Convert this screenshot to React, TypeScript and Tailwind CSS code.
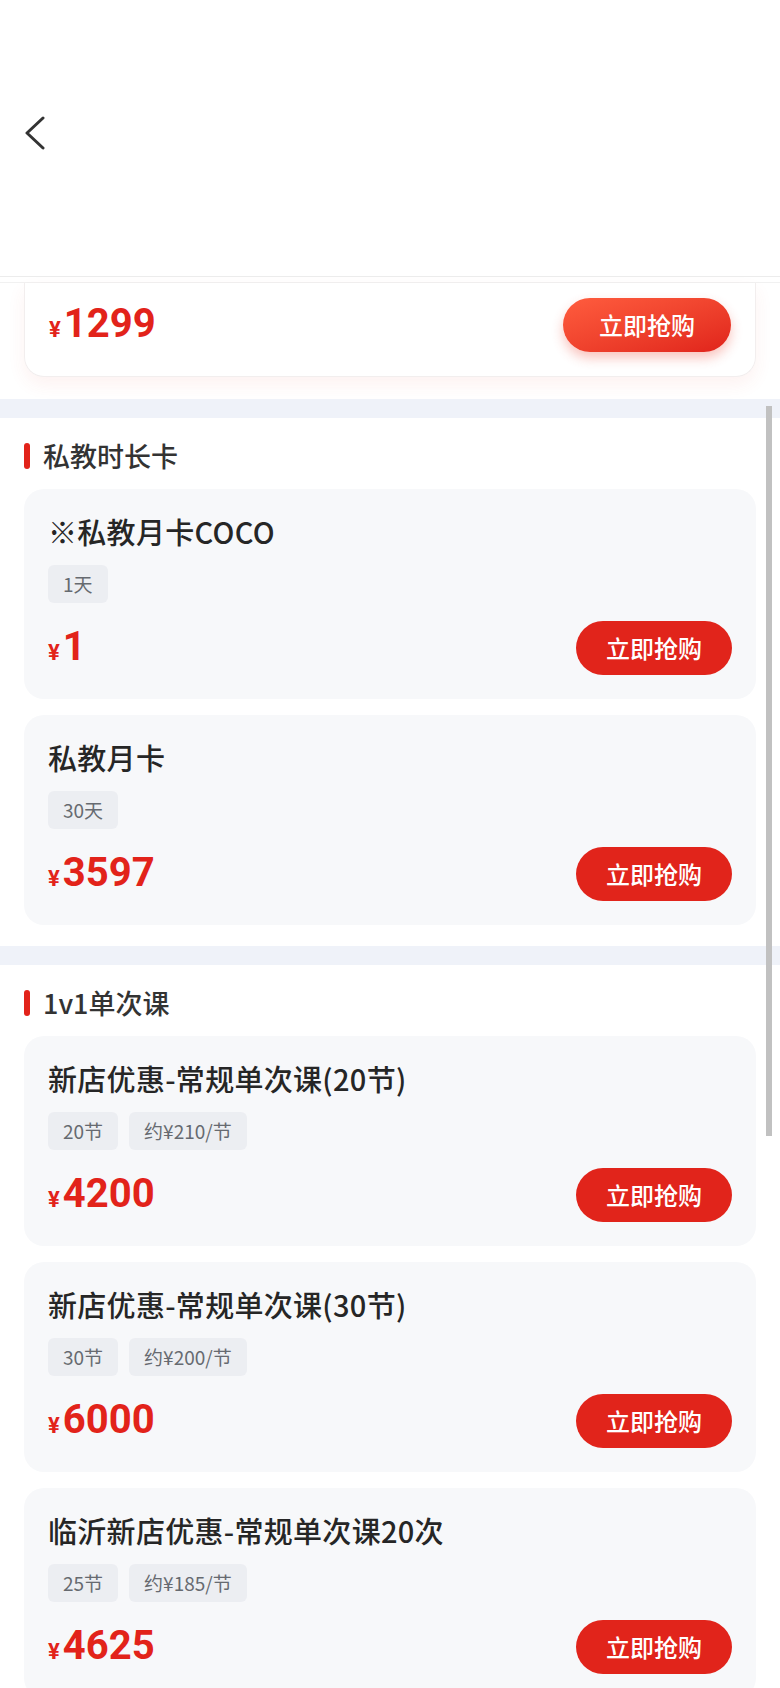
import * as React from 'react';

type Product = {
  title: string;
  tags: string[];
  price: string;
};

const sections: { name: string; items: Product[] }[] = [
  {
    name: '私教时长卡',
    items: [
      { title: '※私教月卡COCO', tags: ['1天'], price: '1' },
      { title: '私教月卡', tags: ['30天'], price: '3597' },
    ],
  },
  {
    name: '1v1单次课',
    items: [
      { title: '新店优惠-常规单次课(20节)', tags: ['20节', '约¥210/节'], price: '4200' },
      { title: '新店优惠-常规单次课(30节)', tags: ['30节', '约¥200/节'], price: '6000' },
      { title: '临沂新店优惠-常规单次课20次', tags: ['25节', '约¥185/节'], price: '4625' },
    ],
  },
];

function Price({ value }: { value: string }) {
  return (
    <div className="flex items-baseline text-[#e2231a] font-['Roboto',sans-serif] font-bold">
      <span className="mr-[3px] text-[22px]">¥</span>
      <span className="text-[40px] leading-none">{value}</span>
    </div>
  );
}

function ProductCard({ item }: { item: Product }) {
  return (
    <div className="rounded-[20px] bg-[#f7f8fa] px-6 pt-[22px] pb-[24px]">
      <div className="text-[29px] leading-[40px] font-medium tracking-[0.3px] text-[#262626]">{item.title}</div>
      <div className="mt-[14px] flex gap-[11px]">
        {item.tags.map((tag) => (
          <span
            key={tag}
            className="flex h-[38px] items-center rounded-[6px] bg-[#eceef2] px-[15px] text-[19px] text-[#666a70]"
          >
            {tag}
          </span>
        ))}
      </div>
      <div className="mt-[18px] flex h-[54px] items-center justify-between">
        <Price value={item.price} />
        <button className="h-[54px] w-[156px] rounded-full bg-[#e1241b] text-[24px] font-medium text-white">
          立即抢购
        </button>
      </div>
    </div>
  );
}

export default function App() {
  return (
    <div className="relative h-[1688px] overflow-hidden bg-white font-['Noto_Sans_CJK_SC','Noto_Sans',sans-serif]">
      {/* header */}
      <div className="h-[277px] border-b border-[#ececec] pl-[24px] pt-[116px]">
        <svg width="22" height="34" viewBox="0 0 22 34" fill="none">
          <path
            d="M19 2 L3 17 L19 32"
            stroke="#333"
            strokeWidth="3"
            strokeLinecap="round"
            strokeLinejoin="round"
          />
        </svg>
      </div>
      <div className="h-[6px] border-b border-[#f1f1f1]" />

      {/* partially scrolled card */}
      <div className="mx-6 mb-[22px] flex items-center justify-between rounded-b-[20px] border border-t-0 border-[#f2eeee] px-6 pt-[15px] pb-[24px] shadow-[0_8px_18px_rgba(230,70,60,0.07)]">
        <Price value="1299" />
        <button className="h-[54px] w-[168px] rounded-full bg-linear-to-br from-[#ff5c3e] to-[#e0221b] text-[24px] font-medium text-white shadow-[0_6px_12px_rgba(235,60,40,0.3)]">
          立即抢购
        </button>
      </div>

      {sections.map((section) => (
        <div key={section.name}>
          <div className="h-[19px] bg-[#eff2f9]" />
          <div className="px-6 pt-[20px] pb-[21px]">
            <div className="flex h-[36px] items-center">
              <span className="h-[26px] w-[6px] rounded-full bg-[#e2231a]" />
              <span className="ml-[13px] text-[27px] font-medium text-[#333]">{section.name}</span>
            </div>
            <div className="mt-[15px] flex flex-col gap-4">
              {section.items.map((item) => (
                <ProductCard key={item.title} item={item} />
              ))}
            </div>
          </div>
        </div>
      ))}

      {/* scrollbar */}
      <div className="absolute right-[8px] top-[406px] h-[730px] w-[6px] bg-[#c1c1c1]" />
    </div>
  );
}
